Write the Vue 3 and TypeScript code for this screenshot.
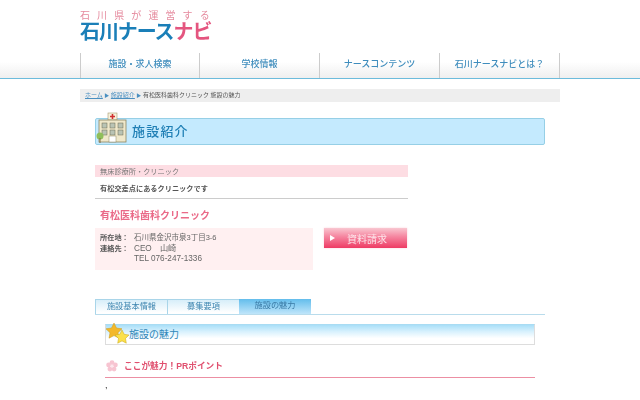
<script setup lang="ts">
const navItems: string[] = ['施設・求人検索', '学校情報', 'ナースコンテンツ', '石川ナースナビとは？']
const tabs: { label: string; active?: boolean }[] = [
  { label: '施設基本情報' },
  { label: '募集要項' },
  { label: '施設の魅力', active: true },
]
</script>

<template>
  <div class="page">
    <header class="head">
      <div class="wrap logo">
        <div class="tag">石川県が運営する</div>
        <div class="brand">石川ナース<span>ナビ</span></div>
      </div>
      <nav class="nav">
        <ul class="wrap nav-list">
          <li v-for="n in navItems" :key="n">{{ n }}</li>
        </ul>
      </nav>
    </header>

    <div class="wrap crumbs">
      <a>ホーム</a><i>▶</i><a>施設紹介</a><i>▶</i><span>有松医科歯科クリニック 施設の魅力</span>
    </div>

    <main class="main">
      <div class="title">
        <svg class="building" viewBox="0 0 32 32" width="32" height="32">
          <rect x="12" y="1" width="9" height="7" fill="#f6f1dc" stroke="#a89a70" stroke-width=".6" />
          <path d="M16.500 2v5M14 4.500h5" stroke="#d03030" stroke-width="1.600" />
          <rect x="3" y="8" width="27" height="22" fill="#efe8cb" stroke="#8f8660" stroke-width=".8" />
          <g fill="#b9c3b4" stroke="#6c6a50" stroke-width=".5">
            <rect x="6" y="11" width="5" height="5" /><rect x="14" y="11" width="5" height="5" /><rect x="22" y="11" width="5" height="5" />
            <rect x="6" y="18" width="5" height="5" /><rect x="14" y="18" width="5" height="5" /><rect x="22" y="18" width="5" height="5" />
          </g>
          <rect x="13" y="24" width="7" height="6" fill="#fff" stroke="#8f8660" stroke-width=".5" />
          <circle cx="4" cy="24" r="3.500" fill="#8fbf5a" />
          <rect x="3.500" y="26" width="1" height="5" fill="#7a6a40" />
        </svg>
        <h1>施設紹介</h1>
      </div>

      <div class="summary">
        <div class="kind">無床診療所・クリニック</div>
        <div class="lead">有松交差点にあるクリニックです</div>
      </div>

      <h2 class="name">有松医科歯科クリニック</h2>

      <div class="info-row">
        <dl class="info">
          <div class="line"><dt>所在地：</dt><dd>石川県金沢市泉3丁目3-6</dd></div>
          <div class="line"><dt>連絡先：</dt><dd class="contact">CEO　山崎<br />TEL 076-247-1336</dd></div>
        </dl>
        <a class="request"><b></b>資料請求</a>
      </div>

      <div class="tabs">
        <div v-for="t in tabs" :key="t.label" class="tab" :class="{ on: t.active }">{{ t.label }}</div>
      </div>

      <div class="section">
        <div class="sub">
          <svg class="stars" viewBox="0 0 26 24" width="26" height="24">
            <path d="M8 1l2.500 5 5.500.8-4 3.900 1 5.500-5-2.600-5 2.600 1-5.500-4-3.900 5.500-.8z" fill="#f3b82a" stroke="#c99a1a" stroke-width=".5" />
            <path d="M16 8l2.200 4.300 4.800.7-3.500 3.400.8 4.800-4.300-2.300-4.300 2.300.8-4.800-3.500-3.400 4.800-.7z" fill="#fbe04a" stroke="#c9a61a" stroke-width=".5" />
          </svg>
          <h3>施設の魅力</h3>
        </div>
        <div class="pr">
          <svg viewBox="0 0 12 12" width="12" height="12">
            <g fill="#f7c4d1">
              <circle cx="6" cy="2.600" r="2.400" /><circle cx="9.400" cy="5" r="2.400" /><circle cx="8.100" cy="9.100" r="2.400" />
              <circle cx="3.900" cy="9.100" r="2.400" /><circle cx="2.600" cy="5" r="2.400" />
            </g>
            <circle cx="6" cy="6" r="1.300" fill="#fde6ec" />
          </svg>
          <span>ここが魅力！PRポイント</span>
        </div>
        <p class="body">,</p>
      </div>
    </main>
  </div>
</template>

<style>
html, body { margin: 0; background: #fff; overflow: hidden; }
</style>

<style scoped>
.page {
  width: 640px;
  height: 400px;
  overflow: hidden;
  font-family: "Liberation Sans", "Noto Sans CJK JP", sans-serif;
  color: #444;
  filter: blur(0.4px);
}
.wrap { width: 480px; margin: 0 auto; box-sizing: border-box; }
.logo { height: 53px; padding-top: 10px; }
.tag { font-size: 10px; line-height: 11px; letter-spacing: 7.100px; color: #e58a9e; white-space: nowrap; }
.brand { margin-top: 1px; font-size: 20px; line-height: 21px; font-weight: 700; color: #1a7fb8; letter-spacing: -1.100px; white-space: nowrap; }
.brand span { color: #e4557f; }
.nav {
  height: 25px;
  border-bottom: 1px solid #6dbcdc;
  background: linear-gradient(#fff 0%, #fff 35%, #efefef 100%);
}
.nav-list { display: flex; list-style: none; padding: 0; height: 25px; margin: 0 auto; }
.nav-list li {
  width: 120px;
  box-sizing: border-box;
  border-right: 1px solid #ccc;
  text-align: center;
  font-size: 9px;
  line-height: 22px;
  font-weight: 500;
  color: #3f8dbd;
}
.nav-list li:first-child { border-left: 1px solid #ccc; }
.crumbs {
  margin-top: 10px;
  height: 13px;
  background: #eee;
  padding-left: 5px;
  font-size: 6px;
  line-height: 13px;
  color: #555;
  white-space: nowrap;
}
.crumbs a { color: #4a8fc0; text-decoration: underline; }
.crumbs i { font-style: normal; color: #4a8fc0; font-size: 5px; margin: 0 1.500px; }
.main { width: 450px; margin: 0 0 0 95px; }
.title {
  position: relative;
  margin-top: 16px;
  height: 27px;
  box-sizing: border-box;
  background: #c4eafe;
  border: 1px solid #96cfe6;
  border-radius: 2px;
}
.building { position: absolute; left: 0; top: -7px; }
.title h1 {
  margin: 0 0 0 36px;
  font-size: 13px;
  line-height: 25px;
  font-weight: 500;
  letter-spacing: 1.200px;
  color: #1f7fb5;
}
.summary { width: 313px; margin-top: 20px; border-bottom: 1px solid #ccc; height: 33px; }
.kind { height: 12px; background: #fddde3; padding-left: 5px; font-size: 7.200px; line-height: 13px; color: #777; }
.lead { padding-left: 5px; font-size: 7.200px; line-height: 23px; font-weight: 700; color: #555; }
.name { margin: 10px 0 0 5px; font-size: 10px; line-height: 14px; font-weight: 700; color: #ea6a88; }
.info-row { display: flex; align-items: flex-start; margin-top: 5px; }
.info {
  width: 218px;
  height: 42px;
  box-sizing: border-box;
  margin: 0;
  padding: 5px 0 0 5px;
  background: #fff0f1;
  font-size: 7.500px;
  line-height: 10.500px;
  color: #666;
}
.line { display: flex; }
.line dt { width: 33px; font-weight: 700; font-size: 7.200px; color: #555; }
.line dd { margin: 0 0 0 1px; white-space: nowrap; }
.line dd.contact { font-size: 8.200px; }
.request {
  margin: 0 0 0 11px;
  width: 83px;
  height: 20px;
  display: flex;
  align-items: center;
  font-size: 10px;
  color: #fde4ea;
  background: linear-gradient(#f9c6d0 0%, #f5839e 45%, #ee3b64 100%);
  box-shadow: 0 0 2px #fbd3dc;
}
.request b {
  width: 0;
  height: 0;
  margin: 0 12px 0 6px;
  border-left: 5px solid #fff;
  border-top: 3px solid transparent;
  border-bottom: 3px solid transparent;
}
.tabs { display: flex; margin-top: 29px; height: 15px; border-bottom: 1px solid #b9dcec; box-sizing: content-box; }
.tab {
  width: 72px;
  box-sizing: border-box;
  height: 15px;
  text-align: center;
  font-size: 8.200px;
  line-height: 14px;
  color: #3f86b0;
  background: linear-gradient(#d7eef9, #fff 90%);
  border: 1px solid #a9d5e9;
  border-bottom: 0;
  border-right-width: 0;
}
.tab.on { background: linear-gradient(#63bdec, #bfe5fa); border: 0; color: #3a7aa5; }
.section { margin: 9px 10px 0; }
.sub {
  position: relative;
  height: 21px;
  box-sizing: border-box;
  background: linear-gradient(#a9dff8 0%, #d8f1fd 35%, #fff 70%);
  border: 1px solid #ddd;
  border-top-color: #a9dcf3;
}
.stars { position: absolute; left: 0; top: -3px; }
.sub h3 { margin: 0 0 0 23px; font-size: 10px; line-height: 19px; font-weight: 400; color: #2f86b8; }
.pr {
  display: flex;
  align-items: center;
  gap: 6px;
  margin-top: 13px;
  height: 19px;
  border-bottom: 1px solid #ec8fa3;
  font-size: 8.700px;
  font-weight: 700;
  color: #e0506f;
}
.pr span, .pr svg { position: relative; top: -2px; }
.pr svg { margin-left: 1px; }
.body { margin: 1px 0 0; font-size: 9px; line-height: 12px; color: #222; }
</style>
